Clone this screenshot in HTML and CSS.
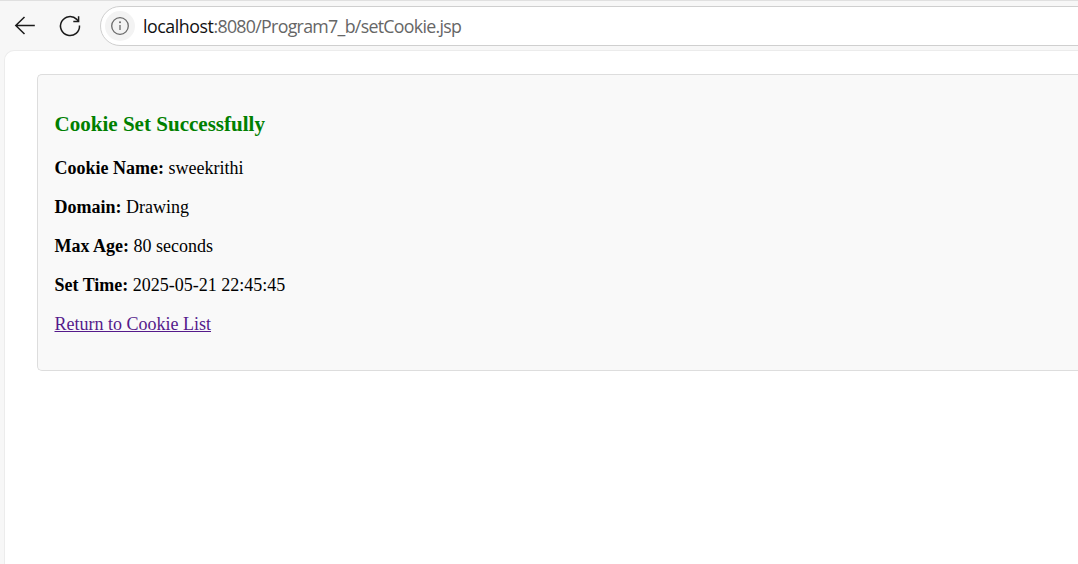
FILE: index.html
```html
<!DOCTYPE html>
<html lang="en">
<head>
<meta charset="utf-8">
<title>Cookie Set</title>
<link rel="stylesheet" href="styles.css">
</head>
<body>
<header class="toolbar">
  <svg class="icon back" width="24" height="24" viewBox="0 0 24 24"><path d="M21.8 11.5H2.8M11.5 3L2.8 11.5l8.7 8.5"/></svg>
  <svg class="icon reload" width="24" height="24" viewBox="0 0 24 24"><path d="M21.5 11.5A9.5 9.5 0 1 1 18.8 5.4L20.4 7.4M20.6 2.3V7.6H15.3"/></svg>
  <div class="address">
    <span class="site-info"><svg width="20" height="20" viewBox="0 0 20 20"><circle cx="10" cy="10" r="8.3"/><path d="M10 9v5"/><circle class="dot" cx="10" cy="6.3" r="1"/></svg></span>
    <span class="url"><span class="host">localhost</span>:8080/Program7_b/setCookie.jsp</span>
  </div>
</header>
<main class="page">
  <section class="card">
    <h2 class="title">Cookie Set Successfully</h2>
    <p class="row"><b>Cookie Name:</b> sweekrithi</p>
    <p class="row"><b>Domain:</b> Drawing</p>
    <p class="row"><b>Max Age:</b> 80 seconds</p>
    <p class="row"><b>Set Time:</b> 2025-05-21 22:45:45</p>
    <p class="row"><a class="link" href="#">Return to Cookie List</a></p>
  </section>
</main>
</body>
</html>
```
FILE: styles.css
```css
* { box-sizing: border-box; }
body { margin: 0; height: 564px; overflow: hidden; background: #f7f7f7; display: flex; flex-direction: column; }
.toolbar { height: 50px; flex: none; display: flex; align-items: center; padding: 1px 0 0 13px; border-top: 1px solid #e0e0e0; }
.icon { flex: none; fill: none; stroke: #1b1b1b; stroke-width: 1.5; }
.reload { margin-left: 21px; }
.address { flex: 1; height: 40px; margin: 0 -30px 0 18px; padding-left: 4px; display: flex; align-items: center; border: 1px solid #cfcfcf; border-radius: 20px; background: #fff; }
.site-info { width: 30px; height: 30px; margin-right: -1px; border-radius: 50%; background: #f3f3f3; display: flex; align-items: center; justify-content: center; }
.site-info svg { fill: none; stroke: #6a6a6a; stroke-width: 1.3; }
.site-info .dot { fill: #6a6a6a; stroke: none; }
.url { margin: -1px 0 0 9px; font: 17.8px/24px "Open Sans", sans-serif; letter-spacing: -0.7px; color: #666; white-space: nowrap; }
.host { color: #111; letter-spacing: -0.45px; }
.page { flex: 1; margin-left: 4px; padding: 23px 0 0 32px; background: #fff; border: 1px solid #ececec; border-width: 1px 0 0 1px; border-top-left-radius: 10px; }
.card { height: 297px; padding: 36px 0 0 16.5px; border: 1px solid #ddd; border-right: 0; border-radius: 5px 0 0 5px; background: #f9f9f9; font: 18px/20px "Liberation Serif", serif; color: #000; }
.title { margin: 0 0 21px; font-size: 21.06px; line-height: 26px; color: green; }
.row { margin: 19px 0 0; }
.link { color: #551a8b; }
```
